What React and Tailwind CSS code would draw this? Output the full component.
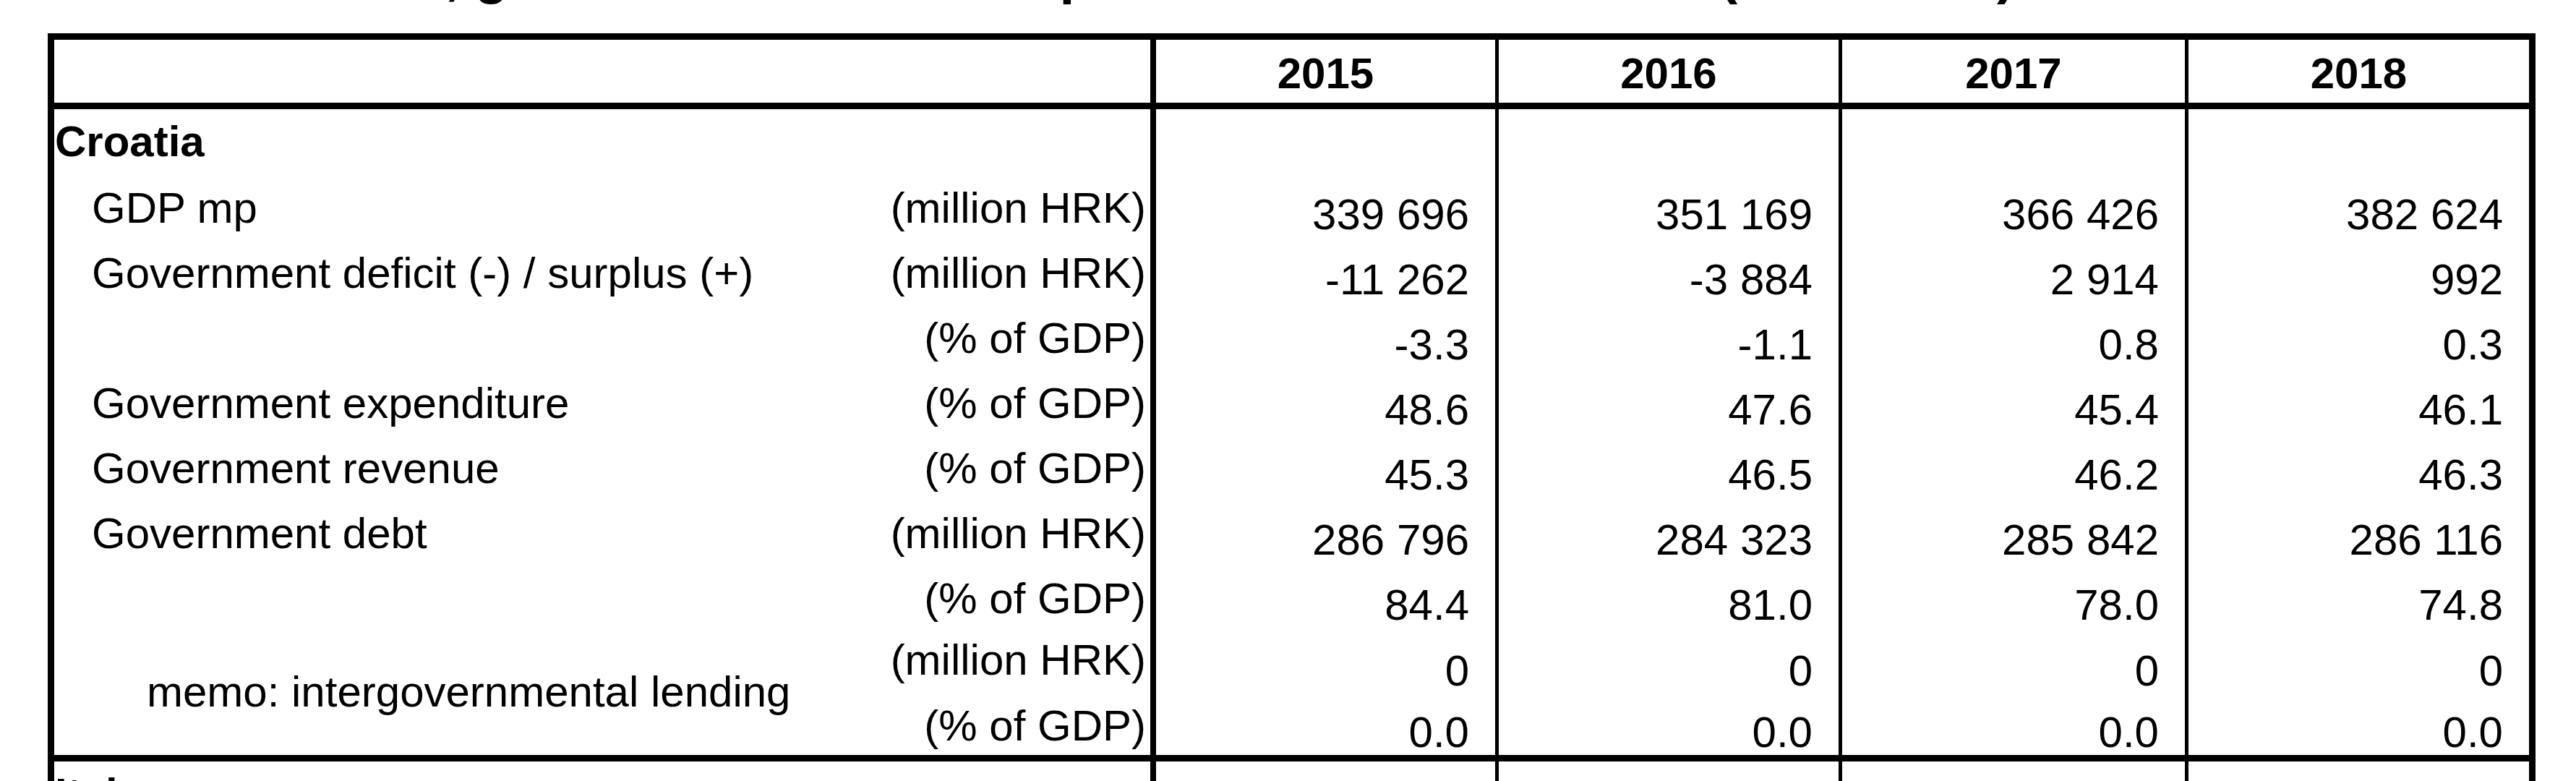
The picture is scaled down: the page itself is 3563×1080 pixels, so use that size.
import React from "react";

const numCls = [
  "w-[474px] border-r-[5px]",
  "w-[475px] border-r-[5px]",
  "w-[479px] border-r-[5px]",
  "w-[471px]",
];

const labelCell = "w-[1524px] shrink-0 border-r-[8px] border-black";

const rows = [
  { label: "GDP mp", unit: "(million HRK)", vals: ["339 696", "351 169", "366 426", "382 624"] },
  { label: "Government deficit (-) / surplus (+)", unit: "(million HRK)", vals: ["-11 262", "-3 884", "2 914", "992"] },
  { label: "", unit: "(% of GDP)", vals: ["-3.3", "-1.1", "0.8", "0.3"] },
  { label: "Government expenditure", unit: "(% of GDP)", vals: ["48.6", "47.6", "45.4", "46.1"] },
  { label: "Government revenue", unit: "(% of GDP)", vals: ["45.3", "46.5", "46.2", "46.3"] },
  { label: "Government debt", unit: "(million HRK)", vals: ["286 796", "284 323", "285 842", "286 116"] },
  { label: "", unit: "(% of GDP)", vals: ["84.4", "81.0", "78.0", "74.8"] },
];

function EmptyNums() {
  return numCls.map((c, i) => <div key={i} className={`${c} shrink-0 border-black`} />);
}

function CountryRow({ name, h }) {
  return (
    <div className={`flex ${h}`}>
      <div className={`${labelCell} pl-[1px] pt-[11px] font-bold`}>{name}</div>
      <EmptyNums />
    </div>
  );
}

function DataRow({ row }) {
  return (
    <div className="flex h-[90px]">
      <div className={`${labelCell} flex justify-between pt-[12px]`}>
        <span className="pl-[52px]">{row.label}</span>
        <span className="pr-[6px]">{row.unit}</span>
      </div>
      {row.vals.map((v, i) => (
        <div key={i} className={`${numCls[i]} shrink-0 border-black pr-[36px] pt-[21px] text-right`}>
          {v}
        </div>
      ))}
    </div>
  );
}

function MemoRow() {
  const a = ["0", "0", "0", "0"];
  const b = ["0.0", "0.0", "0.0", "0.0"];
  return (
    <div className="flex h-[172px]">
      <div className={`${labelCell} flex justify-between`}>
        <span className="pl-[128px] pt-[51px]">memo: intergovernmental lending</span>
        <div className="flex flex-col items-end pr-[6px]">
          <div className="h-[88px] pt-[7px]">(million HRK)</div>
          <div className="pt-[10px]">(% of GDP)</div>
        </div>
      </div>
      {a.map((v, i) => (
        <div key={i} className={`${numCls[i]} flex shrink-0 flex-col border-black pr-[36px] text-right`}>
          <div className="h-[88px] pt-[22px]">{v}</div>
          <div className="pt-[19px]">{b[i]}</div>
        </div>
      ))}
    </div>
  );
}

export default function App() {
  return (
    <div className="h-[1080px] w-[3563px] overflow-hidden bg-white font-['Liberation_Sans',Arial,sans-serif] text-[60px] leading-[67px] text-black">
      <div className="-mt-[77px] h-[84px] whitespace-nowrap pl-[357px] text-[75px] leading-[84px] font-bold">
        Croatia, government deficit/surplus and associated data (2015-2018)
      </div>
      <div className="ml-[66px] mt-[39px] w-[3441px] border-x-[9px] border-t-[9px] border-black">
        <div className="flex h-[96px] border-b-[9px] border-black">
          <div className={labelCell} />
          {["2015", "2016", "2017", "2018"].map((y, i) => (
            <div key={y} className={`${numCls[i]} shrink-0 border-black pt-[13px] text-center font-bold`}>
              {y}
            </div>
          ))}
        </div>
        <div className="border-b-[9px] border-black">
          <CountryRow name="Croatia" h="h-[91px]" />
          {rows.map((r, i) => (
            <DataRow key={i} row={r} />
          ))}
          <MemoRow />
        </div>
        <CountryRow name="Italy" h="h-[100px]" />
      </div>
    </div>
  );
}
